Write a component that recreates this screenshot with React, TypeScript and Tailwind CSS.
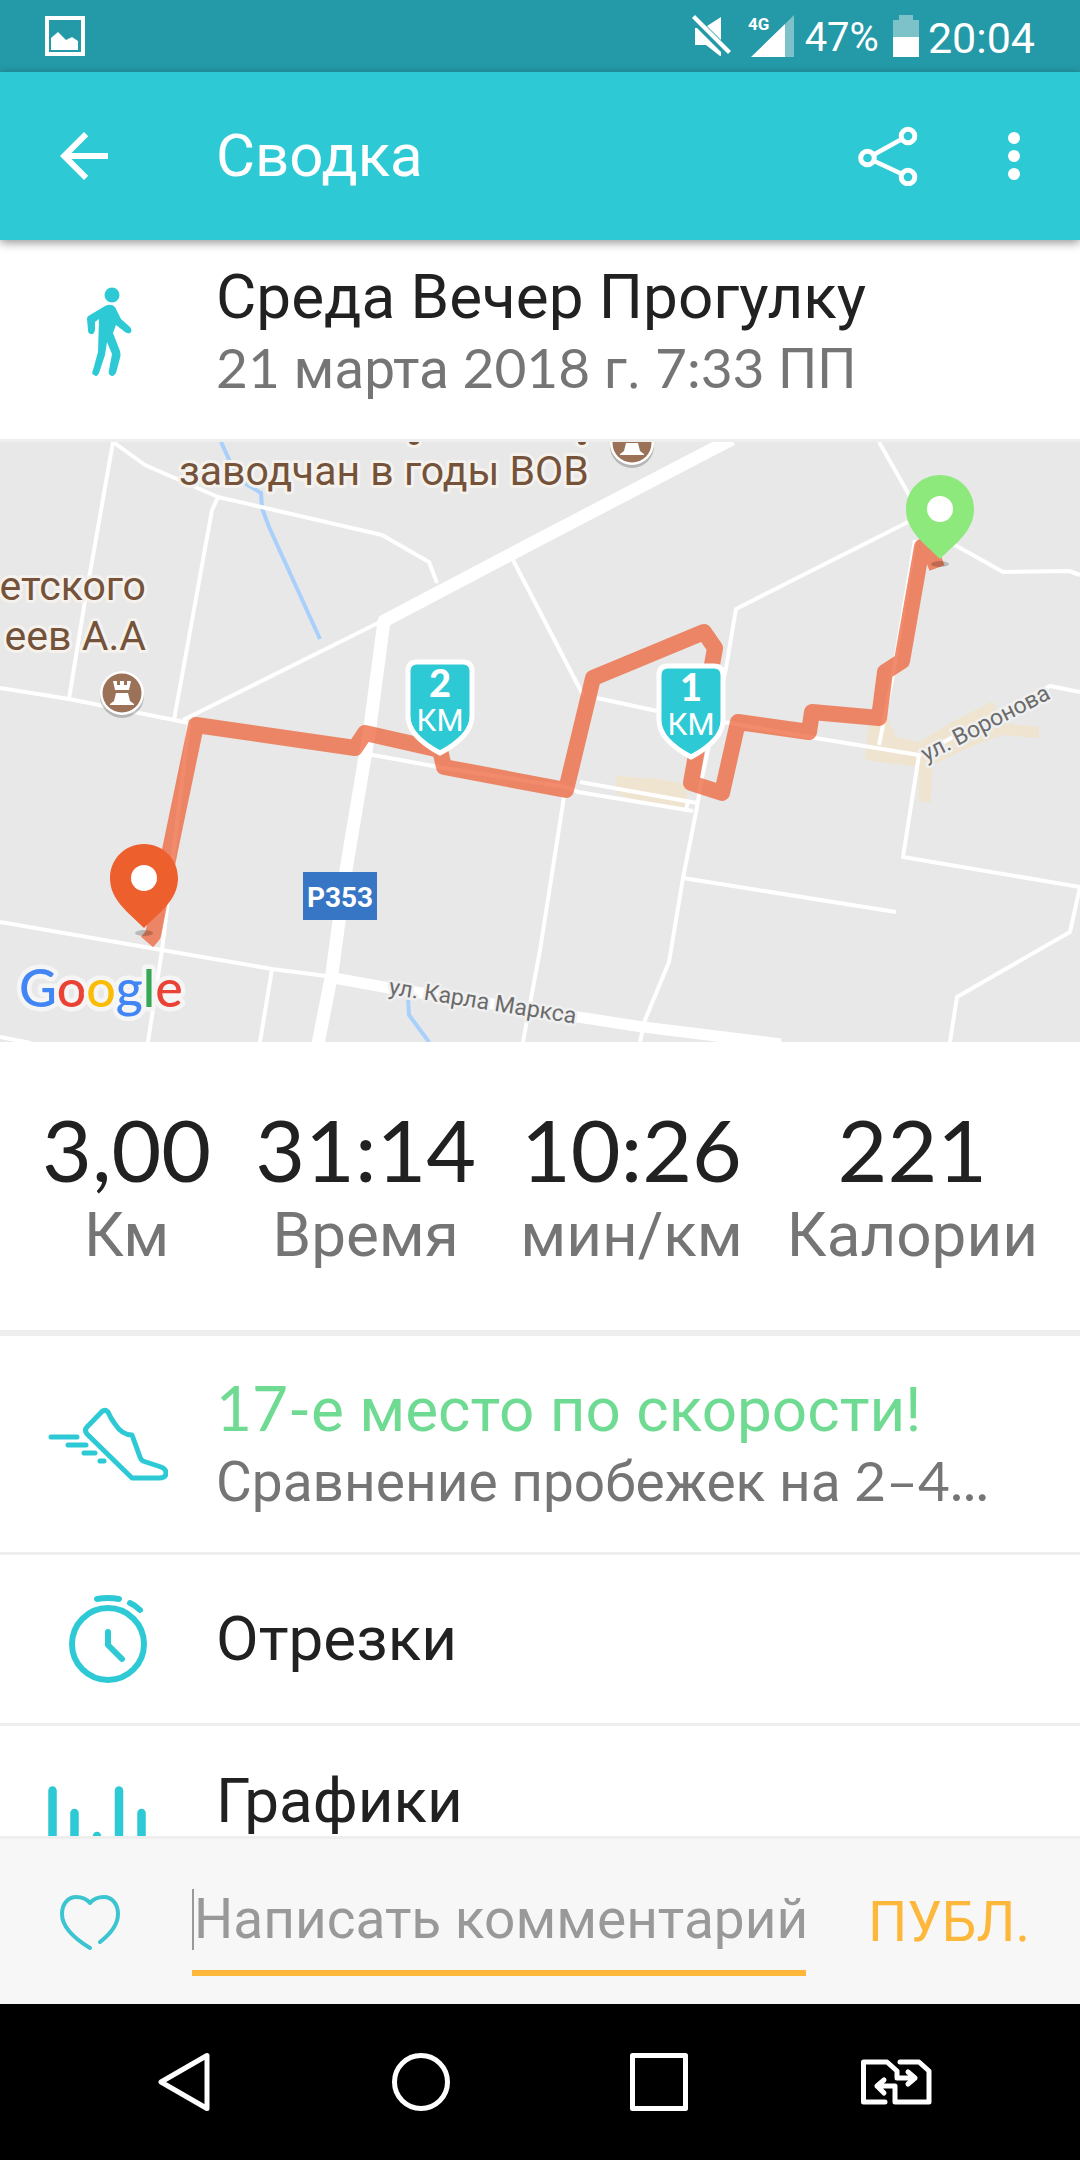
import { useState, type ReactNode } from "react";

interface Stat {
  value: string;
  label: string;
}

const STATS: Stat[] = [
  { value: "3,00", label: "Км" },
  { value: "31:14", label: "Время" },
  { value: "10:26", label: "мин/км" },
  { value: "221", label: "Калории" },
];

// thin side streets
const STREETS = [
  "M113 0L84 165L69 257",
  "M113 0L145 23L218 55L382 93L429 120L437 141",
  "M218 55L212 68L174 278",
  "M0 246L69 257L189 281",
  "M183 278L384 178",
  "M362 311L444 326L566 345L578 350L693 369",
  "M580 340L697 361M688 359L686 368",
  "M513 118L583 253M597 256L657 269L729 281L809 295L919 313",
  "M879 0L908 51L930 95",
  "M908 80L736 167L726 226L702 335L697 365L683 436L669 520L645 578L640 600",
  "M930 95L955 103L1003 130L1069 129L1080 133",
  "M915 98L893 232L883 283L879 303",
  "M1080 250L1050 244L919 313L903 415L1080 445L1070 490L957 555L950 600",
  "M683 436L896 470",
  "M564 355L540 508L523 600",
  "M0 480L162 508L272 527L334 535",
  "M189 281L162 508L148 600",
  "M272 527L260 600",
  "M0 595L31 601",
];

const ROUTE =
  "M147 500L153 493L170 408L196 283L355 306L365 291L440 308L444 325L566 348L593 236L704 190L715 206L691 341L722 351L738 280L809 290L812 270L879 276L885 230L902 219L922 105L928 102L937 126";

function Num({ children }: { children: ReactNode }) {
  return <span className="font-['Lato',sans-serif] leading-none">{children}</span>;
}

function StatusBar() {
  return (
    <div className="flex h-[72px] shrink-0 items-center bg-[#2499a7] pr-[45px] pl-[45px] text-white">
      <svg className="h-10 w-10" viewBox="0 0 40 40" fill="none">
        <path d="M2 2h36v36H2z" stroke="currentColor" strokeWidth="4" />
        <path d="M6 22l7-6 8 8 6-3 6 4v9H6z" fill="currentColor" />
      </svg>
      <div className="ml-auto flex items-center">
        <svg className="h-[42px] w-10" viewBox="0 0 40 42" fill="currentColor">
          <path d="M3 0L39 36l-3 3L0 3z" />
          <path d="M15 11L29 2v23z" />
          <path d="M3 13h2l24 24v4h-1L14 30H3z" />
        </svg>
        <svg className="ml-4 h-[42px] w-[46px]" viewBox="0 0 46 42">
          <path d="M46 0v42H37V9z" fill="#7dc1c9" />
          <path d="M37 9v33H3z" fill="#fff" />
          <text x="0" y="15" className="fill-white font-['Roboto',sans-serif] text-[17px] font-bold">4G</text>
        </svg>
        <span className="ml-[11px] pt-1 text-[40px] leading-[48px]">47%</span>
        <svg className="ml-[14px] h-[42px] w-[26px]" viewBox="0 0 26 42">
          <path d="M6 0h14v5h6v17H0V5h6z" fill="#7dc1c9" />
          <path d="M0 22h26v20H0z" fill="#fff" />
        </svg>
        <span className="ml-[9px] pt-1 text-[43px] leading-[48px]">20:04</span>
      </div>
    </div>
  );
}

function AppBar() {
  return (
    <header className="relative z-10 flex h-[168px] shrink-0 items-center bg-[#2dcad6] pr-[30px] pl-12 text-white shadow-[0_3px_9px_rgba(0,0,0,0.4)]">
      <button type="button" aria-label="Назад" className="mr-24">
        <svg className="h-[72px] w-[72px]" viewBox="0 0 24 24" fill="currentColor">
          <path d="M20 11H7.83l5.59-5.59L12 4l-8 8 8 8 1.41-1.41L7.83 13H20z" />
        </svg>
      </button>
      <h1 className="text-[60px] leading-[70px]">Сводка</h1>
      <button type="button" aria-label="Поделиться" className="ml-auto">
        <svg className="h-[60px] w-[60px]" viewBox="0 0 60 60" fill="none" stroke="currentColor" strokeWidth="5">
          <circle cx="9.500" cy="32" r="6.800" />
          <circle cx="50" cy="10" r="6.800" />
          <circle cx="50" cy="51" r="6.800" />
          <path d="M16 28.500L44 13M16 35L44 48" strokeWidth="4.500" />
        </svg>
      </button>
      <button type="button" aria-label="Меню" className="ml-[60px]">
        <svg className="h-[72px] w-[72px]" viewBox="0 0 24 24" fill="currentColor">
          <circle cx="12" cy="6" r="2" />
          <circle cx="12" cy="12" r="2" />
          <circle cx="12" cy="18" r="2" />
        </svg>
      </button>
    </header>
  );
}

function Castle({ x, y }: { x: number; y: number }) {
  return (
    <g transform={`translate(${x} ${y})`}>
      <circle cy="3" r="22" fill="#000" opacity="0.22" />
      <circle r="22" fill="#fff" />
      <circle r="19.500" fill="#9b7257" />
      <path d="M-9-12h4v4h3v-4h4v4h3v-4h4L7-3H-7zM-6 0H6L8 8l4 3v1h-24v-1l4-3z" fill="#fff" />
    </g>
  );
}

function KmMarker({ x, y, km }: { x: number; y: number; km: number }) {
  return (
    <g transform={`translate(${x} ${y})`}>
      <path
        d="M-23 2H23Q32 2 32 11V56Q32 76 0 93Q-32 76-32 56V11Q-32 2-23 2Z"
        fill="#2dcad6"
        stroke="#fff"
        strokeWidth="5"
      />
      <text y="37" textAnchor="middle" className="fill-white font-['Lato',sans-serif] text-[38px] font-black">{km}</text>
      <text y="71" textAnchor="middle" className="fill-white text-[31px]">КМ</text>
    </g>
  );
}

function Pin({ x, y, color }: { x: number; y: number; color: string }) {
  return (
    <g transform={`translate(${x} ${y})`}>
      <ellipse cy="55" rx="9" ry="3" fill="#000" opacity="0.2" />
      <path d="M0-34C-19-34-34-19-34 0C-34 22-16 34 0 50C16 34 34 22 34 0C34-19 19-34 0-34Z" fill={color} />
      <circle r="13" fill="#fff" />
    </g>
  );
}

function RouteMap() {
  return (
    <svg
      className="block h-[600px] w-full bg-[#e8e8e8] font-['Roboto',sans-serif]"
      viewBox="0 0 1080 600"
      preserveAspectRatio="xMidYMid slice"
      role="img"
      aria-label="Карта маршрута"
    >
      <g fill="#efe4cf">
        <path d="M616 334L659 337L684 342L690 367L655 364L616 352Z" />
        <path d="M868 285L888 276L896 295L919 300L950 281L993 259L1003 281L1039 285V296L1001 293L963 308L932 323L931 360H919V325L865 318Z" />
      </g>
      <path d="M221 0L238 37L261 51L262 66L269 85L320 197M408 555L409 573L429 600" fill="none" stroke="#a9d0fb" strokeWidth="4" />
      <g fill="none" stroke="#fff" strokeLinejoin="round">
        {STREETS.map((d) => (
          <path key={d} d={d} strokeWidth="4" />
        ))}
        <path d="M334 536L389 546L578 575L643 585L781 602" strokeWidth="11" />
        <path d="M732-3L540 97L384 179L370 285L346 428L332 531L318 602" strokeWidth="13" />
      </g>

      <g className="fill-[#74533a] text-[41px]" stroke="#f5f2ee" strokeWidth="6" strokeLinejoin="round" paintOrder="stroke">
        <ellipse cx="414" cy="0" rx="5" ry="3" />
        <ellipse cx="582" cy="0" rx="4" ry="3" />
        <text x="179" y="43">заводчан в годы ВОВ</text>
        <text x="146" y="158" textAnchor="end">етского</text>
        <text x="146" y="208" textAnchor="end">еев А.А</text>
      </g>
      <Castle x={632} y={1} />
      <Castle x={122} y={251} />

      <path d={ROUTE} fill="none" stroke="#ec6439" strokeWidth="16" strokeLinejoin="round" opacity="0.75" />

      <g className="fill-[#6b6b6b] text-[23px]" stroke="#f0f0f0" strokeWidth="5" strokeLinejoin="round" paintOrder="stroke">
        <text transform="translate(926 320) rotate(-27)">ул. Воронова</text>
        <text transform="translate(388 552) rotate(9)">ул. Карла Маркса</text>
      </g>
      <rect x="303" y="430" width="74" height="48" fill="#3776c4" />
      <text x="340" y="465" textAnchor="middle" className="fill-white text-[28px] font-bold">P353</text>

      <KmMarker x={440} y={218} km={2} />
      <KmMarker x={691} y={222} km={1} />
      <Pin x={940} y={67} color="#8de97c" />
      <Pin x={144} y={436} color="#ee5f2e" />

      <text
        x="19"
        y="565"
        className="font-['Lato',sans-serif] text-[52px] font-medium"
        stroke="#f5f5f5"
        strokeWidth="9"
        strokeLinejoin="round"
        paintOrder="stroke"
      >
        <tspan fill="#4285f4">G</tspan>
        <tspan fill="#ea4335">o</tspan>
        <tspan fill="#fbbc05">o</tspan>
        <tspan fill="#4285f4">g</tspan>
        <tspan fill="#34a853">l</tspan>
        <tspan fill="#ea4335">e</tspan>
      </text>
    </svg>
  );
}

function IconCell({ children }: { children: ReactNode }) {
  return <span className="flex w-[216px] shrink-0 justify-center text-[#2dcad6]">{children}</span>;
}

function ShoeIcon() {
  return (
    <svg className="h-[74px] w-[120px]" viewBox="0 0 120 74" fill="none" stroke="currentColor" strokeWidth="5" strokeLinecap="round" strokeLinejoin="round">
      <path d="M54 4.500L39 20Q36 23 39 27L84 71H111Q118 71 118 66Q118 62 113 60L95 54Q93 53 92 50L84 28Q74 28 67 17Q63 12 60 5Q57 2 54 4.500Z" />
      <path d="M3 30H29M20 38H38M36 46H47M52 54H56" />
    </svg>
  );
}

function StopwatchIcon() {
  return (
    <svg className="h-[90px] w-[78px]" viewBox="0 0 78 90" fill="none" stroke="currentColor" strokeWidth="6" strokeLinecap="round" strokeLinejoin="round">
      <circle cx="39" cy="50" r="36" />
      <path d="M39 38V51L53 65M28 5Q39 3 50 5M61 9Q66 11 71 16" />
    </svg>
  );
}

function ChartIcon() {
  return (
    <svg className="h-24 w-[120px]" viewBox="0 0 120 96" stroke="currentColor" strokeWidth="8.500" strokeLinecap="round">
      <path d="M4.500 4.500V92M26.500 27V92M49 50V92M71 4.500V92M93.500 27V92M115.500 60V92" />
    </svg>
  );
}

function NavBar() {
  return (
    <nav className="flex h-[156px] shrink-0 items-center bg-black px-[65px] text-white">
      <button type="button" aria-label="Назад" className="flex flex-1 justify-center">
        <svg className="h-[60px] w-[52px]" viewBox="0 0 52 60" fill="none" stroke="currentColor" strokeWidth="5" strokeLinejoin="round">
          <path d="M3 30L49 3.500V56.500Z" />
        </svg>
      </button>
      <button type="button" aria-label="Домой" className="flex flex-1 justify-center">
        <svg className="h-[60px] w-[60px]" viewBox="0 0 60 60" fill="none" stroke="currentColor" strokeWidth="5">
          <circle cx="30" cy="30" r="26.500" />
        </svg>
      </button>
      <button type="button" aria-label="Недавние" className="flex flex-1 justify-center">
        <svg className="h-[60px] w-[60px]" viewBox="0 0 60 60" fill="none" stroke="currentColor" strokeWidth="5" strokeLinejoin="round">
          <path d="M3.500 3.500h53v53h-53z" />
        </svg>
      </button>
      <button type="button" aria-label="Сменить SIM" className="flex flex-1 justify-center">
        <svg className="h-[46px] w-[72px]" viewBox="0 0 72 46" fill="none" stroke="currentColor" strokeWidth="5" strokeLinecap="round" strokeLinejoin="round">
          <path d="M25 43H3.500V3H27L37 12V19H55M48 13L55 19L48 25" />
          <path d="M40 3H59L69 12V43H35V27H17M24 21L17 27L24 34" />
        </svg>
      </button>
    </nav>
  );
}

export default function App() {
  const [comment, setComment] = useState("");

  return (
    <div className="flex h-screen flex-col overflow-hidden bg-white font-['Roboto',sans-serif] text-[#212121]">
      <StatusBar />
      <AppBar />

      <main className="min-h-0 flex-1 overflow-hidden">
        <section className="flex items-center border-b-3 border-[#eeeeee] pt-[22px] pb-[38px]">
          <IconCell>
            <svg className="h-[90px] w-[48px]" viewBox="0 0 48 90" fill="currentColor">
              <circle cx="28" cy="8" r="7.500" />
              <path d="M21 19Q27 16 31 20L37 32L46 40Q49 44 46 46Q44 47 41 45L32 38L29 46L36 64Q37 68 36 71L32 86Q29 91 26 88Q24 87 25 83L28 67L23 55L21 68L15 86Q13 91 10 88Q7 87 9 83L14 65L15 32L11 35V43Q10 48 7 47Q4 47 4 43L3 32Q3 29 6 28Z" />
            </svg>
          </IconCell>
          <div className="flex min-w-0 flex-col gap-[5px]">
            <h2 className="text-[62px] leading-[70px]">Среда Вечер Прогулку</h2>
            <p className="text-[55px] leading-[64px] text-[#757575]">
              <Num>21</Num> марта <Num>2018</Num> г. <Num>7:33</Num> ПП
            </p>
          </div>
        </section>

        <RouteMap />

        <dl className="flex justify-between border-b-6 border-[#eeeeee] px-[42px] pt-[56px] pb-[60px] text-center">
          {STATS.map((s) => (
            <div key={s.label} className="flex flex-col-reverse">
              <dt className="text-[62px] leading-[70px] text-[#757575]">{s.label}</dt>
              <dd className="font-['Lato',sans-serif] text-[86px] leading-[102px]">{s.value}</dd>
            </div>
          ))}
        </dl>

        <button type="button" className="flex h-[219px] w-full items-center border-b-3 border-[#eeeeee] text-left">
          <IconCell><ShoeIcon /></IconCell>
          <span className="flex min-w-0 flex-col gap-[5px] whitespace-nowrap">
            <span className="text-[62px] leading-[70px] text-[#6fdb92]"><Num>17-</Num>е место по скорости!</span>
            <span className="text-[55px] leading-[64px] text-[#757575]">
              Сравнение пробежек на <Num>2–4...</Num>
            </span>
          </span>
        </button>

        <button type="button" className="flex h-[171px] w-full items-center border-b-3 border-[#eeeeee] text-left">
          <IconCell><StopwatchIcon /></IconCell>
          <span className="text-[62px] leading-[70px]">Отрезки</span>
        </button>

        <button type="button" className="flex h-[219px] w-full items-center border-b-3 border-[#eeeeee] text-left">
          <IconCell><ChartIcon /></IconCell>
          <span className="mt-10 self-start text-[62px] leading-[70px]">Графики</span>
        </button>
      </main>

      <form
        className="flex h-[168px] shrink-0 items-center border-t-3 border-[#eeeeee] bg-[#f7f7f7] pr-[50px] pl-[60px]"
        onSubmit={(e) => e.preventDefault()}
      >
        <button type="button" aria-label="Нравится" className="mr-[72px] text-[#3cc5d0]">
          <svg className="h-14 w-[60px]" viewBox="0 0 60 56" fill="none" stroke="currentColor" strokeWidth="4" strokeLinecap="round" strokeLinejoin="round">
            <path d="M30 54Q2 37 2 20C2 9 9 3 16 3Q25 3 30 9Q35 3 44 3C51 3 58 9 58 20Q58 34 40 48" />
          </svg>
        </button>
        <label className="flex min-w-0 flex-1 items-center border-b-6 border-[#fdb73b] pt-5 pb-[18px]">
          <span className="h-[61px] w-[2px] shrink-0 bg-[#999999]" />
          <input
            type="text"
            aria-label="Комментарий"
            value={comment}
            onChange={(e) => setComment(e.target.value)}
            placeholder="Написать комментарий"
            className="h-[64px] w-full min-w-0 text-[55px] outline-none placeholder:text-[#999999]"
          />
        </label>
        <button type="submit" className="ml-[62px] text-[55px] leading-[64px] text-[#fdb73b]">ПУБЛ.</button>
      </form>

      <NavBar />
    </div>
  );
}
